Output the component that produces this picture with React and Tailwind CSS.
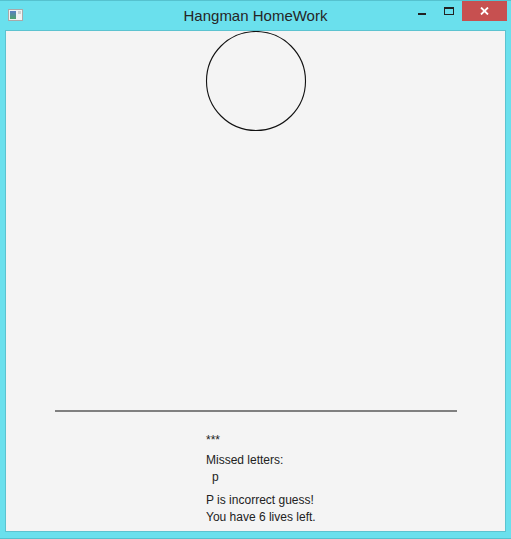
const lines = [
  { text: '***', cls: '' },
  { text: 'Missed letters:', cls: 'mt-[4px]' },
  { text: 'p', cls: 'mt-[1px] pl-[6px]' },
  { text: 'P is incorrect guess!', cls: 'mt-[7px]' },
  { text: 'You have 6 lives left.', cls: 'mt-[1px]' },
]

function AppIcon() {
  return (
    <svg width="15" height="12" viewBox="0 0 15 12" aria-hidden>
      <rect x="0.5" y="0.5" width="14" height="11" fill="#f2f2f2" stroke="#a9a9a9" />
      <defs>
        <linearGradient id="ico" x1="0" y1="0" x2="0" y2="1">
          <stop offset="0" stopColor="#5c7fc4" />
          <stop offset="1" stopColor="#4fa36a" />
        </linearGradient>
      </defs>
      <rect x="2" y="2" width="6" height="8" fill="url(#ico)" />
      <rect x="10" y="2" width="3" height="3" fill="#cfcfcf" />
    </svg>
  )
}

function TitleBar() {
  return (
    <div className="grid h-[29px] grid-cols-[1fr_auto_1fr] items-start">
      <div className="pl-[8px] pt-[8px]">
        <AppIcon />
      </div>
      <div className="pt-[5px] text-[15px] leading-[20px] text-[#262626]">Hangman HomeWork</div>
      <div className="flex items-start justify-end pr-[4px]">
        <div className="mr-[18px] mt-[12px] h-[2px] w-[8px] bg-[#222]" />
        <div className="mr-[8px] mt-[6px] h-[8px] w-[10px] border border-t-2 border-[#222]" />
        <div className="flex h-[20px] w-[45px] items-center justify-center bg-[#c75050]">
          <svg width="9" height="8" viewBox="0 0 9 8" aria-hidden>
            <path d="M1 0.5 L8 7.5 M8 0.5 L1 7.5" stroke="#fff" strokeWidth="1.8" />
          </svg>
        </div>
      </div>
    </div>
  )
}

export default function App() {
  return (
    <div
      className="h-[539px] w-[511px] overflow-hidden border-t border-b border-[#55c2cf] bg-[#6ae0ed]"
      style={{ fontFamily: '"Liberation Sans", Arial, sans-serif' }}
    >
      <TitleBar />
      <div className="mx-[5px] h-[502px] border border-[#5cc3d0] bg-[#f4f4f4]">
        <svg width="500" height="400" className="block" aria-hidden>
          <circle cx="250" cy="50" r="49.5" fill="none" stroke="#111" strokeWidth="1.1" />
          <line x1="49" y1="380" x2="451" y2="380" stroke="#808080" strokeWidth="2" />
        </svg>
        <div className="pl-[200px] pt-[1px] text-[12px] leading-[16px] text-[#222]">
          {lines.map((l) => (
            <div key={l.text} className={l.cls}>
              {l.text}
            </div>
          ))}
        </div>
      </div>
    </div>
  )
}
